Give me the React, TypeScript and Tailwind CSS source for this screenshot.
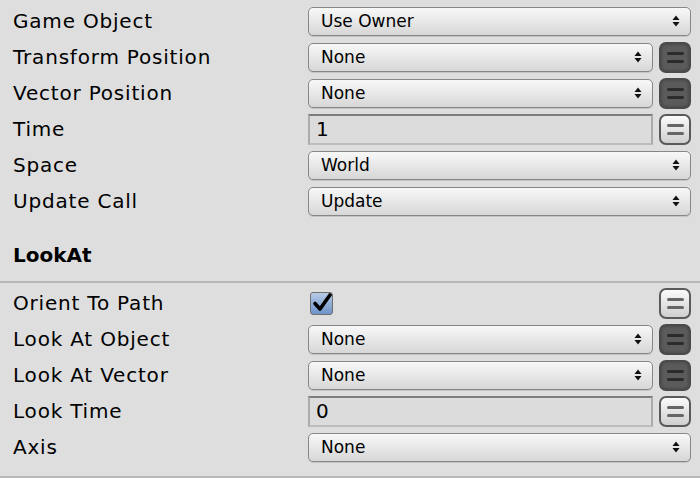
import React from 'react';

type Row =
  | { label: string; kind: 'select'; value: string; button?: 'dark' | 'light' }
  | { label: string; kind: 'field'; value: string }
  | { label: string; kind: 'check' };

const topRows: Row[] = [
  { label: 'Game Object', kind: 'select', value: 'Use Owner' },
  { label: 'Transform Position', kind: 'select', value: 'None', button: 'dark' },
  { label: 'Vector Position', kind: 'select', value: 'None', button: 'dark' },
  { label: 'Time', kind: 'field', value: '1' },
  { label: 'Space', kind: 'select', value: 'World' },
  { label: 'Update Call', kind: 'select', value: 'Update' },
];

const lookRows: Row[] = [
  { label: 'Orient To Path', kind: 'check' },
  { label: 'Look At Object', kind: 'select', value: 'None', button: 'dark' },
  { label: 'Look At Vector', kind: 'select', value: 'None', button: 'dark' },
  { label: 'Look Time', kind: 'field', value: '0' },
  { label: 'Axis', kind: 'select', value: 'None' },
];

function Arrows() {
  return (
    <svg width="8" height="12" viewBox="0 0 8 12" className="shrink-0">
      <path d="M4 0.5 L7.5 5 L0.5 5 Z" fill="#111" />
      <path d="M4 11.5 L7.5 7 L0.5 7 Z" fill="#111" />
    </svg>
  );
}

function EqButton({ dark }: { dark: boolean }) {
  return (
    <div
      className={
        dark
          ? 'flex h-[31px] w-[32px] shrink-0 flex-col items-center justify-center gap-[5px] rounded-[7px] border-2 border-[#4a4a4a] bg-[#5b5b5b] shadow-[inset_0_0_3px_#3e3e3e]'
          : 'flex h-[31px] w-[32px] shrink-0 flex-col items-center justify-center gap-[5px] rounded-[7px] border-2 border-[#5a5a5a] bg-linear-to-b from-[#fbfbfb] to-[#cfcfcf]'
      }
    >
      <div className={dark ? 'h-[3px] w-[17px] rounded-full bg-[#2c2c2c]' : 'h-[3px] w-[17px] rounded-full bg-[#666]'} />
      <div className={dark ? 'h-[3px] w-[17px] rounded-full bg-[#2c2c2c]' : 'h-[3px] w-[17px] rounded-full bg-[#666]'} />
    </div>
  );
}

function Select({ value }: { value: string }) {
  return (
    <div className="flex h-[29px] flex-1 items-center justify-between rounded-[5px] border-[1.5px] border-[#878787] bg-linear-to-b from-[#f8f8f8] to-[#d7d7d7] pl-[12px] pr-[10px] text-[17px] text-black shadow-[0_1px_0_#c4c4c4]">
      <span className="leading-none">{value}</span>
      <Arrows />
    </div>
  );
}

function Field({ value }: { value: string }) {
  return (
    <div className="flex h-[31px] flex-1 items-center border-x-2 border-t-2 border-b-2 border-x-[#ababab] border-t-[#7d7d7d] border-b-[#bdbdbd] bg-[#dcdcdc] pl-[6px] text-[20px] text-black">
      <span className="leading-none">{value}</span>
    </div>
  );
}

function Check() {
  return (
    <div className="flex flex-1 items-center">
      <div className="ml-[2px] flex h-[23px] w-[23px] items-center justify-center rounded-[3px] border-[1.5px] border-[#6f6f6f] bg-linear-to-b from-[#b7cbe6] to-[#6f93c9]">
        <svg width="20" height="20" viewBox="0 0 20 20">
          <path d="M3 10.5 L8 16 L18 2" fill="none" stroke="#000" strokeWidth="3.6" strokeLinecap="round" strokeLinejoin="round" />
        </svg>
      </div>
    </div>
  );
}

function PropRow({ row }: { row: Row }) {
  return (
    <div className="flex h-[36px] items-center pr-[9px]">
      <div className="w-[308px] shrink-0 pl-[13px] text-[20px] tracking-[0.8px] text-black">{row.label}</div>
      <div className="flex flex-1 items-center gap-[6px]">
        {row.kind === 'select' && (
          <>
            <Select value={row.value} />
            {row.button && <EqButton dark={row.button === 'dark'} />}
          </>
        )}
        {row.kind === 'field' && (
          <>
            <Field value={row.value} />
            <EqButton dark={false} />
          </>
        )}
        {row.kind === 'check' && (
          <>
            <Check />
            <EqButton dark={false} />
          </>
        )}
      </div>
    </div>
  );
}

export default function App() {
  return (
    <div
      className="flex h-[478px] w-[700px] flex-col overflow-hidden bg-[#dedede]"
      style={{ fontFamily: '"DejaVu Sans", "Noto Sans", sans-serif' }}
    >
      <div className="pt-[3px]">
        {topRows.map((r) => (
          <PropRow key={r.label} row={r} />
        ))}
      </div>
      <div className="flex h-[63px] items-center pl-[13px] pt-[10px] text-[20px] font-bold text-black">LookAt</div>
      <div className="h-[2px] bg-[#b8b8b8]" />
      <div className="pt-[2px]">
        {lookRows.map((r) => (
          <PropRow key={r.label} row={r} />
        ))}
      </div>
      <div className="mt-[11px] h-[2px] bg-[#b8b8b8]" />
    </div>
  );
}
